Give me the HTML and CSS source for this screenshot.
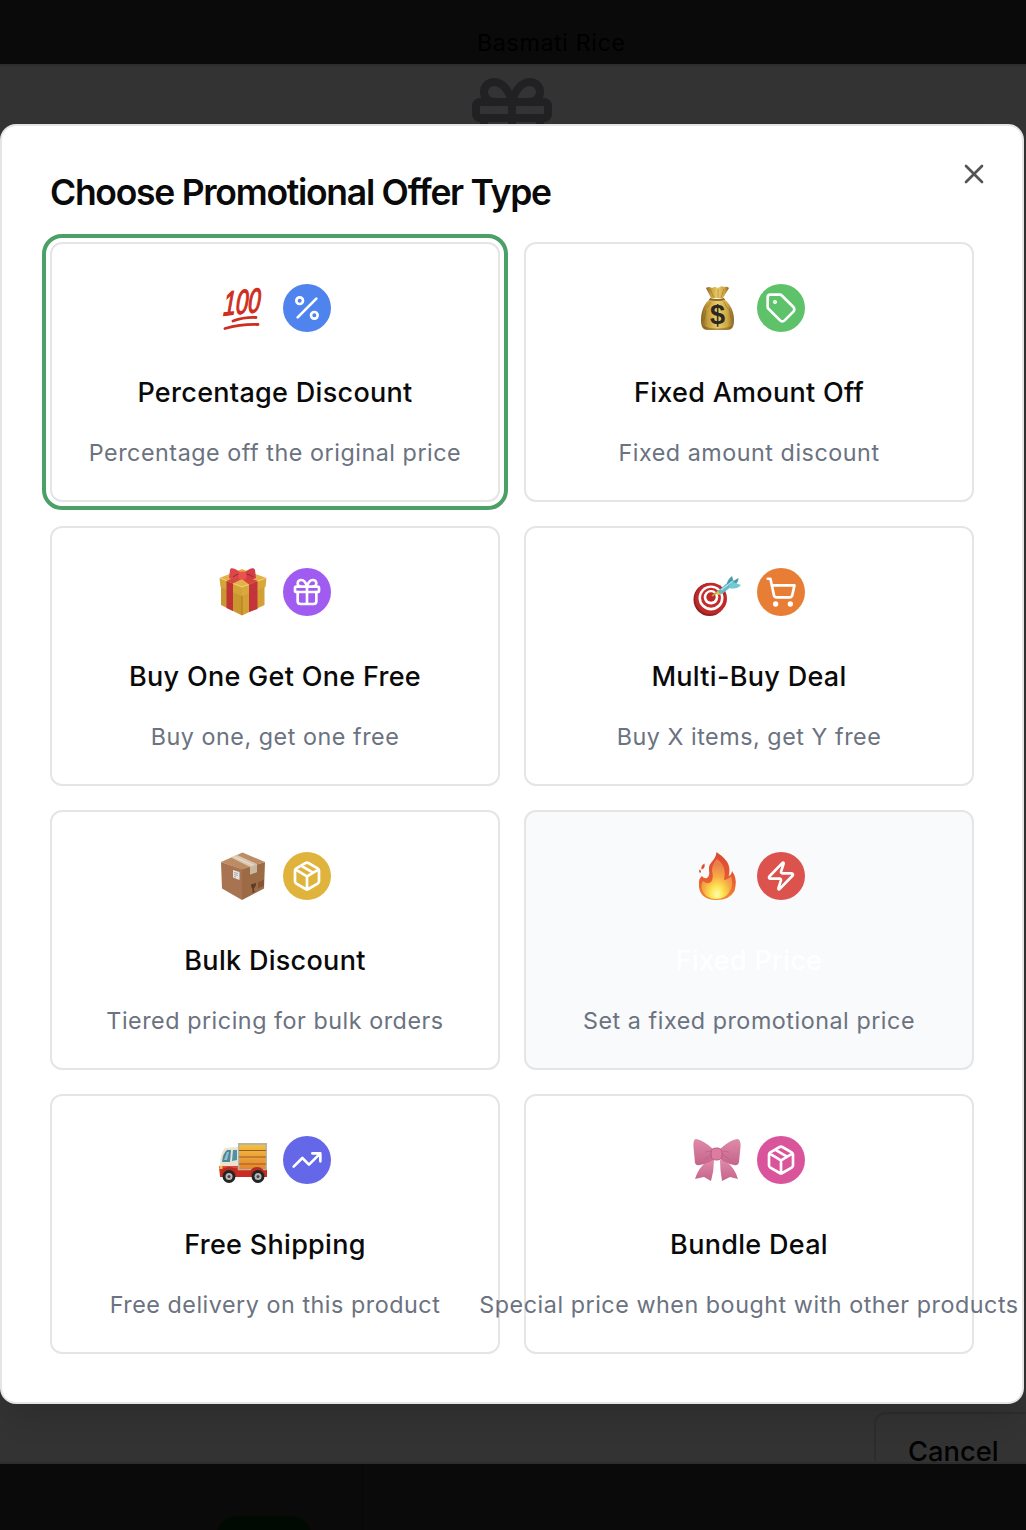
FILE: index.html
```html
<!DOCTYPE html>
<html lang="en">
<head>
<meta charset="utf-8">
<title>Choose Promotional Offer Type</title>
<link rel="stylesheet" href="styles.css">
</head>
<body>
<div class="page">
  <div class="strip strip-top"><span class="product">Basmati Rice</span></div>
  <div class="sheet">
    <svg class="line-icon sheet-icon" viewBox="0 0 24 24"><rect x="3" y="8" width="18" height="4" rx="1"/><path d="M12 8v13M19 12v7a2 2 0 0 1-2 2H7a2 2 0 0 1-2-2v-7M7.5 8a2.5 2.5 0 0 1 0-5A4.8 8 0 0 1 12 8a4.8 8 0 0 1 4.5-5 2.5 2.5 0 0 1 0 5"/></svg>
    <div class="cancel">Cancel</div>
  </div>
  <div class="strip strip-bottom"><div class="side"><div class="pill"></div></div></div>
</div>

<div class="dialog">
  <svg class="line-icon close" viewBox="0 0 24 24"><path d="M18 6 6 18M6 6l12 12"/></svg>
  <h1 class="heading">Choose Promotional Offer Type</h1>
  <div class="grid">

    <div class="card selected">
      <div class="icons">
        <svg class="emoji" viewBox="0 0 48 48">
          <g transform="translate(4 31.500) rotate(-6) skewX(-9) scale(.72 1.080)"><text class="hundred" x="0" y="0" textLength="52" lengthAdjust="spacingAndGlyphs">100</text></g>
          <path d="M14 37Q25 33 37 33.500M6 44.500Q22 40 39 40.500" fill="none" stroke="#cf2d20" stroke-width="2.8" stroke-linecap="round"/>
        </svg>
        <span class="badge blue"><svg class="line-icon" viewBox="0 0 24 24"><path d="M19 5 5 19"/><circle cx="6.5" cy="6.5" r="2.5"/><circle cx="17.5" cy="17.5" r="2.5"/></svg></span>
      </div>
      <h2 class="name">Percentage Discount</h2>
      <p class="desc">Percentage off the original price</p>
    </div>

    <div class="card">
      <div class="icons">
        <svg class="emoji" viewBox="0 0 48 48">
          <defs><linearGradient id="bag"><stop offset="0" stop-color="#80601e"/><stop offset=".2" stop-color="#c49c3c"/><stop offset=".5" stop-color="#ebcd68"/><stop offset=".8" stop-color="#cfa642"/><stop offset="1" stop-color="#866323"/></linearGradient></defs>
          <path d="M17 15C12 19 8 26 8 36c0 7 2 10 7 10h19c5 0 7-3 7-10 0-10-5-17-10-21z" fill="url(#bag)"/>
          <path d="M13 4q3-2 6 0 3-2 6 0 4-3 6-1 3-1 5 1l-6 10H18z" fill="url(#bag)"/>
          <path d="m17 5 4 9m4-9v9m6-9-3 9M13 26l-2 10m25-12 2 10M18 18l-4 6m17-6 4 7" stroke="#77541d" stroke-width=".8" fill="none" opacity=".5"/>
          <path d="M17 14q7 2 14 0l1 2q-8 2-16 0z" fill="#946923"/>
          <path d="M10 42q14 5 29 0-1 4-5 4H15q-4 0-5-4" fill="#5c421c" opacity=".4"/>
          <text class="dollar" x="24.400" y="39.500" text-anchor="middle">$</text>
        </svg>
        <span class="badge green"><svg class="line-icon" viewBox="0 0 24 24"><path d="M12.586 2.586A2 2 0 0 0 11.172 2H4a2 2 0 0 0-2 2v7.172a2 2 0 0 0 .586 1.414l8.704 8.704a2.426 2.426 0 0 0 3.42 0l6.58-6.58a2.426 2.426 0 0 0 0-3.42z"/><circle cx="7.5" cy="7.5" r=".5" fill="currentColor"/></svg></span>
      </div>
      <h2 class="name">Fixed Amount Off</h2>
      <p class="desc">Fixed amount discount</p>
    </div>

    <div class="card">
      <div class="icons">
        <svg class="emoji" viewBox="0 0 48 48">
          <path d="M2 15v22l21 10.500V22z" fill="#c9962f"/><path d="M45.500 15v22L23 47.500V22z" fill="#d3a035"/>
          <path d="M.5 10 23 19v9L1.500 19z" fill="#d5a439"/><path d="M47.500 10 23 19v9l23.500-9z" fill="#d9a83c"/>
          <path d="M.5 10 23 1l24.500 9L23 19z" fill="#e4b04a"/>
          <path d="m1 10 22 9 24-9" stroke="#f0d070" stroke-width="1" fill="none"/>
          <path d="M23 28v19" stroke="#a87622" stroke-width=".8"/>
          <path d="m7.500 13 6.500 2.500V43l-6.500-3z" fill="#c03236"/><path d="m30 16.500 8.500-3.500V41L30 44z" fill="#c3353a"/>
          <path d="m7.500 13 14-6 6 1.500-13.500 7zM26 8l12.500 5-8.500 3.500-9-7z" fill="#d8433d"/>
          <path d="M21 4C16 0 11-1 11 2l-1 8q7 4 12 0z" fill="#d9474a"/><path d="M26 4c5-4 9-5 10-2l1 8q-6 3-12 0z" fill="#d23e45"/>
          <path d="M21 6q-4 0-7 3m12-3q5 0 8 3" stroke="#a32332" fill="none"/><rect x="19.500" y="3.500" width="8" height="8" rx="3" fill="#e9534f"/>
        </svg>
        <span class="badge purple"><svg class="line-icon" viewBox="0 0 24 24"><rect x="3" y="8" width="18" height="4" rx="1"/><path d="M12 8v13M19 12v7a2 2 0 0 1-2 2H7a2 2 0 0 1-2-2v-7M7.5 8a2.5 2.5 0 0 1 0-5A4.8 8 0 0 1 12 8a4.8 8 0 0 1 4.5-5 2.5 2.5 0 0 1 0 5"/></svg></span>
      </div>
      <h2 class="name">Buy One Get One Free</h2>
      <p class="desc">Buy one, get one free</p>
    </div>

    <div class="card">
      <div class="icons">
        <svg class="emoji" viewBox="0 0 48 48">
          <ellipse cx="16.500" cy="31.500" rx="16" ry="16.500" fill="#8e1f22"/><ellipse cx="18" cy="30.500" rx="16" ry="15.800" fill="#c0292a"/>
          <circle cx="18" cy="30" r="12.500" fill="#fff"/><circle cx="18" cy="29.800" r="10" fill="#c42d2d"/><circle cx="18" cy="29.300" r="7.300" fill="#fff"/><circle cx="18" cy="29" r="4.700" fill="#bd2929"/>
          <path d="m19 28 7-5" stroke="#c59c36" stroke-width="2"/><path d="m23 25 3-3 3 4-4 1z" fill="#e5c643"/>
          <path d="m25 23 9-8 4-1 1 4-10 8q-3 0-4-3" fill="#67bac7"/>
          <path d="M34 16q0-4 5-8l1.500 5q3-2 5-3 0 4-3 6-4 2-6 3z" fill="#4b9ca9"/><path d="m36 17 4-3 8 3q-4 5-12 3z" fill="#71c9d4"/><path d="m28 22 12-9" stroke="#a8e8ee" stroke-width="1.200"/>
        </svg>
        <span class="badge orange"><svg class="line-icon" viewBox="0 0 24 24"><circle cx="8" cy="21" r="1"/><circle cx="19" cy="21" r="1"/><path d="M2.050 2.050h2l2.660 12.420a2 2 0 0 0 2 1.580h9.780a2 2 0 0 0 1.950-1.570l1.650-7.430H5.120"/></svg></span>
      </div>
      <h2 class="name">Multi-Buy Deal</h2>
      <p class="desc">Buy X items, get Y free</p>
    </div>

    <div class="card">
      <div class="icons">
        <svg class="emoji" viewBox="0 0 48 48">
          <path d="M2 10 23 17v31L3 36.500z" fill="#a87350"/><path d="M46 10 23 17v31l22-11.500z" fill="#9c6a45"/><path d="M2 10 23.500.5 46 10 23 17.500z" fill="#bd8c64"/>
          <path d="m12 5.500 6-2.500L38 12v8l-7 2.500V15z" fill="#d8c8b2"/><path d="m31 15 7-3v8l-7 2.500z" fill="#c9b89f"/>
          <path d="m14.500 4.500 20 9" stroke="#e8dccb" stroke-width="1.200"/>
          <path d="m14 18 6.500 2v8L14 25.500z" fill="#e6e4df"/><path d="m15 20.500 4 1m-4 1 4 1m-4 1 2 .5" stroke="#8d9ba8" stroke-width=".8"/>
          <path d="M32 32.500 37 31q0 4-2 5v3l1.500.5-3 1.200V37q-1.500-1-1.500-4.500" fill="#5d3b25"/><path d="M40 30v6m2-7v6m2-7v6" stroke="#704a30" stroke-width="1.200"/>
        </svg>
        <span class="badge yellow"><svg class="line-icon" viewBox="0 0 24 24"><path d="M11 21.730a2 2 0 0 0 2 0l7-4A2 2 0 0 0 21 16V8a2 2 0 0 0-1-1.730l-7-4a2 2 0 0 0-2 0l-7 4A2 2 0 0 0 3 8v8a2 2 0 0 0 1 1.730zM12 22V12M3.300 7l7.703 4.734a2 2 0 0 0 1.994 0L20.700 7M7.500 4.270l9 5.150"/></svg></span>
      </div>
      <h2 class="name">Bulk Discount</h2>
      <p class="desc">Tiered pricing for bulk orders</p>
    </div>

    <div class="card hovered">
      <div class="icons">
        <svg class="emoji" viewBox="0 0 48 48">
          <defs><linearGradient id="flame" x1="0" y1="0" x2="0" y2="1"><stop offset="0" stop-color="#da4932"/><stop offset=".55" stop-color="#e75a31"/><stop offset="1" stop-color="#f18b31"/></linearGradient><radialGradient id="glow" cx=".5" cy=".88" r=".75"><stop offset="0" stop-color="#fffbb5"/><stop offset=".25" stop-color="#ffe853"/><stop offset=".6" stop-color="#f6aa45"/><stop offset="1" stop-color="#ea7f4c"/></radialGradient></defs>
          <path d="M23.500 0c7 5 13 10 13 18q0 4-1 6 3-1 3.500-5 5 7 3.500 15l-1 5q-5 9-18 9C12 48 5 42 6 31c0-4 1-5 3-7q2 3 5 2 3-2 2-8c-1-8 7-9 7.500-18" fill="url(#flame)"/>
          <path d="M24 7c7 5 9 11 7 21q5-1 7-4 3 9-1 15-4 8-14 8-9 0-13-7-3-6 0-11 4 4 8 1 3-4 1-11 0-7 5-12z" fill="url(#glow)"/>
          <path d="m11.500 11.500q-4 2-3 6 4-1 3-6M7 17.500q-2 1.500 0 3.500 2-1 0-3.500" fill="#df4d33"/>
        </svg>
        <span class="badge red"><svg class="line-icon" viewBox="0 0 24 24"><path d="M4 14a1 1 0 0 1-.78-1.630l9.900-10.200a.5.5 0 0 1 .86.46l-1.920 6.020A1 1 0 0 0 13 10h7a1 1 0 0 1 .78 1.630l-9.900 10.200a.5.5 0 0 1-.86-.46l1.920-6.020A1 1 0 0 0 11 14z"/></svg></span>
      </div>
      <h2 class="name">Fixed Price</h2>
      <p class="desc">Set a fixed promotional price</p>
    </div>

    <div class="card">
      <div class="icons">
        <svg class="emoji" viewBox="0 0 48 48">
          <defs><linearGradient id="cargo" x1="0" y1="0" x2="0" y2="1"><stop offset="0" stop-color="#f2bf41"/><stop offset="1" stop-color="#e5852e"/></linearGradient></defs>
          <path d="M1 31q0-14 5-19l13-1v23H1z" fill="#ebe3ce"/>
          <path d="M3 26q1-9 5-12h4l-1 12z" fill="#4d879c"/><path d="m5 24 3-8h2l-2 8" fill="#8fc1cd"/><path d="M14 14h4v10l-5 1z" fill="#4d92aa"/>
          <path d="M0 30h19v4h29v7H1z" fill="#c72d22"/><path d="M1 31h18v3h28" stroke="#ed6655" fill="none"/>
          <path d="M19 7h29v27H19z" fill="#b5b3a2"/><path d="M20.500 9h26v24h-26z" fill="url(#cargo)"/>
          <path d="M20 14.500h27M20 21h27M20 28h27" stroke="#9b5b25" stroke-width="1"/>
          <path d="M.5 30h3v3h-3z" fill="#f5bf43"/>
          <path d="M3 39q0-8 7-8t7 8m14 0q0-8 7-8t8 8" fill="#b52b21"/>
          <circle cx="10" cy="40.500" r="6.500" fill="#242424"/><circle cx="39" cy="40.500" r="6.500" fill="#242424"/><circle cx="10" cy="40.500" r="3.500" fill="#b7b9b7"/><circle cx="39" cy="40.500" r="3.500" fill="#b7b9b7"/><circle cx="10" cy="40.500" r="1.500" fill="#444"/><circle cx="39" cy="40.500" r="1.500" fill="#444"/>
        </svg>
        <span class="badge indigo"><svg class="line-icon" viewBox="0 0 24 24"><path d="M16 7h6v6M22 7l-8.500 8.500-5-5L2 17"/></svg></span>
      </div>
      <h2 class="name">Free Shipping</h2>
      <p class="desc">Free delivery on this product</p>
    </div>

    <div class="card">
      <div class="icons">
        <svg class="emoji" viewBox="0 0 48 48">
          <defs><linearGradient id="bow" x1="0" y1="0" x2="0" y2="1"><stop offset="0" stop-color="#e08aa9"/><stop offset="1" stop-color="#c4648a"/></linearGradient></defs>
          <path d="M19 24Q7 27 2 43l9-2 7 4Q21 35 21 24zM28 24q12 3 17 19l-8-2-8 4Q27 34 27 24z" fill="url(#bow)"/>
          <path d="M20 13Q10 4 3 3 0 3 .5 11L2 27q1 3 5 2 9-2 14-6zM27 13Q37 4 44 3q4 0 3.500 8L46 26q-1 4-5 3-9-2-14-6z" fill="url(#bow)"/>
          <path d="m18 15-6 1m6 3-6 4m18-8 6 1m-6 3 6 4" stroke="#a9456d" stroke-width="1" fill="none" opacity=".35"/>
          <rect x="18" y="12" width="11" height="12" rx="4.500" fill="#dc7c9f" stroke="#b14d73" stroke-width=".8"/>
        </svg>
        <span class="badge pink"><svg class="line-icon" viewBox="0 0 24 24"><path d="M11 21.730a2 2 0 0 0 2 0l7-4A2 2 0 0 0 21 16V8a2 2 0 0 0-1-1.730l-7-4a2 2 0 0 0-2 0l-7 4A2 2 0 0 0 3 8v8a2 2 0 0 0 1 1.730zM12 22V12M3.300 7l7.703 4.734a2 2 0 0 0 1.994 0L20.700 7M7.500 4.270l9 5.150"/></svg></span>
      </div>
      <h2 class="name">Bundle Deal</h2>
      <p class="desc">Special price when bought with other products</p>
    </div>
  </div>
</div>
</body>
</html>
```
FILE: styles.css
```css
* { box-sizing: border-box; margin: 0; }
body {
  position: relative;
  width: 1026px;
  height: 1530px;
  overflow: hidden;
  font-family: Inter, "Liberation Sans", sans-serif;
  background: #0a0a0a;
}
.line-icon {
  display: block;
  width: 32px;
  height: 32px;
  fill: none;
  stroke: currentColor;
  stroke-width: 2;
  stroke-linecap: round;
  stroke-linejoin: round;
}
.page { display: grid; grid-template-rows: 64px 1400px 66px; }
.strip { background: #0a0a0a; overflow: hidden; }
.strip-top { padding: 27px 0 0 477px; }
.product { display: block; font-size: 23.3px; line-height: 32px; letter-spacing: .6px; color: #000; }
.sheet {
  display: flex;
  flex-direction: column;
  align-items: center;
  justify-content: space-between;
  overflow: hidden;
  padding-top: 4px;
  background: #333;
  border: solid #2d2d2d;
  border-width: 2px 0;
}
.sheet-icon { width: 96px; height: 96px; margin-right: 2px; color: #212124; }
.cancel {
  align-self: flex-end;
  width: 152px;
  height: 50px;
  padding: 18px 0 0 32px;
  border: 2px solid #2d2d2d;
  border-width: 2px 0 0 2px;
  border-radius: 12px 0 0 0;
  font-size: 27.3px;
  line-height: 40px;
  font-weight: 500;
  color: #020202;
}
.side { width: 363px; height: 66px; padding: 52px 0 0 217px; border-right: 1px solid #070707; }
.pill { width: 94px; height: 40px; border-radius: 20px; background: #000a03; }

.dialog {
  position: absolute;
  top: 124px;
  left: 0;
  width: 1024px;
  height: 1280px;
  padding: 48px;
  background: #fff;
  border: 2px solid #e5e5e5;
  border-radius: 16px;
  box-shadow: 0 20px 30px -6px rgba(0, 0, 0, .12);
}
.close { position: absolute; top: 32px; right: 32px; color: #545454; }
.heading {
  height: 68px;
  font-size: 35.5px;
  line-height: 37px;
  font-weight: 600;
  letter-spacing: -1.27px;
  color: #0a0a0a;
}
.grid { display: grid; grid-template-columns: 450px 450px; grid-auto-rows: 260px; gap: 24px; }
.card {
  display: flex;
  flex-direction: column;
  align-items: center;
  padding-top: 40px;
  border: 2px solid #e5e5e5;
  border-radius: 12px;
  white-space: nowrap;
}
.selected { outline: 4px solid #4aa067; outline-offset: 4px; }
.hovered { background: #f9fafb; }
.icons { display: flex; gap: 16px; height: 48px; }
.emoji { display: block; width: 48px; height: 48px; overflow: visible; }
.hundred { font: italic 400 31px "Liberation Sans", sans-serif; fill: #cf2d20; stroke: #cf2d20; stroke-width: 1.2px; }
.dollar { font: 700 27px "Liberation Sans", sans-serif; fill: #292822; }
.badge {
  display: flex;
  align-items: center;
  justify-content: center;
  width: 48px;
  height: 48px;
  border-radius: 50%;
  color: #fff;
}
.blue { background: #4f83ee; }
.green { background: #5ec26a; }
.purple { background: #a05bf0; }
.orange { background: #e87d36; }
.yellow { background: #e0b43c; }
.red { background: #dc524d; }
.indigo { background: #6467e8; }
.pink { background: #d9549a; }
.name { margin-top: 40px; font-size: 27px; line-height: 41px; height: 40px; font-weight: 500; letter-spacing: .3px; color: #0a0a0a; }
.hovered .name { color: #fff; }
.desc { margin-top: 25px; font-size: 23.3px; line-height: 32px; letter-spacing: .54px; color: #6b7280; }
```
